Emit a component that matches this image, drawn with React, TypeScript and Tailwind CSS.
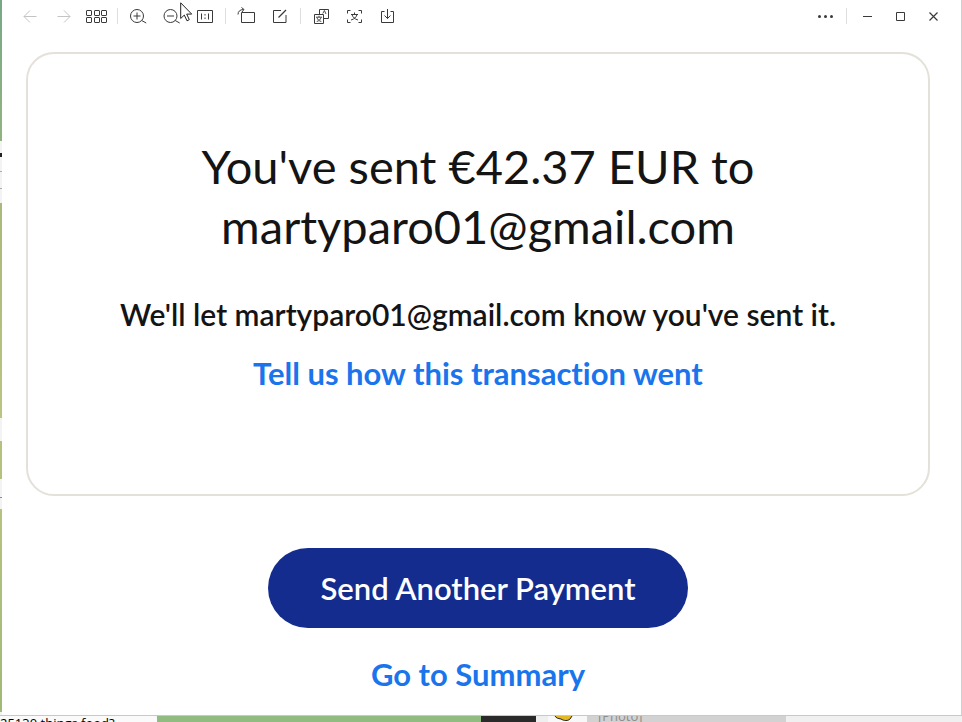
import type { ReactNode } from "react";

export default function App() {
  return (
    <div className="flex min-h-screen flex-col bg-[#f3f3f3] font-['Lato',sans-serif] [font-variant-ligatures:none]">
      <div className="flex flex-1">
        <DesktopEdge />
        <div className="relative flex min-w-0 flex-1 flex-col border-r border-[#cfcfcf] bg-white">
          <Toolbar />
          <main className="flex flex-col items-center pt-5 pr-[31px] pb-2 pl-6">
            <section className="flex w-full flex-col items-center rounded-[28px] border-2 border-[#e4e0da] px-20 pt-[82px] pb-[92px] text-center text-[#141414]">
              <h1 className="max-w-[600px] text-[47px] leading-[60px]">
                You've sent €42.37 EUR to martyparo01@gmail.com
              </h1>
              <p className="mt-7 text-[30px] leading-[60px] font-semibold">
                We'll let martyparo01@gmail.com know you've sent it.
              </p>
              <a href="#feedback" className="text-[31px] leading-[58px] font-bold text-[#1a74ec]">
                Tell us how this transaction went
              </a>
            </section>
            <button
              type="button"
              className="mt-[52px] h-20 rounded-full bg-[#142c8e] px-[52px] text-[31px] font-semibold text-white"
            >
              Send Another Payment
            </button>
            <a href="#summary" className="mt-4 text-[31px] leading-[60px] font-bold text-[#1a74ec]">
              Go to Summary
            </a>
          </main>
          <Cursor />
        </div>
      </div>
      <ChatStrip />
    </div>
  );
}

function Toolbar() {
  return (
    <header className="flex h-8 items-center justify-between pr-[11px] pl-3 text-[#3a3a3a]">
      <div className="flex items-center">
        <ToolButton label="Previous" muted>
          <path d="M16.5 10.5H4M10 4.5l-6 6 6 6" />
        </ToolButton>
        <ToolButton label="Next" muted>
          <path d="M4.5 10.5H17M11 4.5l6 6-6 6" />
        </ToolButton>
        <ToolButton label="Thumbnails">
          {[4.5, 11.5].map((y) =>
            [0.5, 8.5, 15.5].map((x) => <rect key={`${x}-${y}`} x={x} y={y} width="5" height="5" rx="0.5" />)
          )}
        </ToolButton>
        <Separator />
        <ToolButton label="Zoom in">
          <circle cx="9" cy="10" r="6.5" />
          <path d="M5.5 10h7M9 6.5v7M13.7 14.5l4.5 2.5" />
        </ToolButton>
        <ToolButton label="Zoom out">
          <circle cx="9.5" cy="10" r="6.5" />
          <path d="M6 10h7M14.2 14.5l4.5 2.5" />
        </ToolButton>
        <ToolButton label="Actual size">
          <path d="M3.5 4.5h15v12h-15zM7.5 7.5v6M14.5 7.5v6M11 8v1.5M11 11.5V13" />
        </ToolButton>
        <Separator />
        <ToolButton label="Rotate">
          <path d="M5.5 6.5h13v10h-13zM2 8.5C2 5.5 4 3.5 7.5 3.5M5.5 1.5l2.5 2-2 2.5" />
        </ToolButton>
        <ToolButton label="Edit">
          <path d="M12 4.5H4.5v12h12.5v-7.5" />
          <path strokeWidth="1.3" d="M9.5 11.5l7.5-7.5" />
        </ToolButton>
        <Separator />
        <ToolButton label="Translate">
          <path d="M8.5 8.5v-5h9v9h-5M3.5 8.5h9v9h-9z" />
          <path
            strokeWidth="0.9"
            d="M5 11.2h6M8 9.8v1.4M6 11.5c.5 2 2 3.5 4.3 4M10 11.5c-.5 2-2 3.5-4.3 4M11.8 7.500l1.600-3 1.600 3.500"
          />
        </ToolButton>
        <ToolButton label="Extract text">
          <path d="M3.5 7.5v-3h3M14.5 4.5h3v3M17.5 13.5v3h-3M6.5 16.5h-3v-3" />
          <path d="M7 8.5h7M10.5 6.5v2M8 8.5c.6 2.6 2.5 4.5 6 5.5M13 8.5c-.6 2.6-2.5 4.5-6 5.5" />
        </ToolButton>
        <ToolButton label="Save">
          <path d="M7.5 5.5h-3v11h12v-11h-3M10.5 3v9.5M7.5 9.5l3 3 3-3" />
        </ToolButton>
      </div>
      <div className="flex items-center">
        <ToolButton label="More">
          <g fill="currentColor" stroke="none">
            <circle cx="4.5" cy="10.5" r="1.5" />
            <circle cx="10.5" cy="10.5" r="1.5" />
            <circle cx="16.5" cy="10.5" r="1.5" />
          </g>
        </ToolButton>
        <Separator />
        <ToolButton label="Minimize">
          <path d="M6 10.5h9" />
        </ToolButton>
        <ToolButton label="Maximize">
          <path d="M6.5 6.5h8v8h-8z" />
        </ToolButton>
        <ToolButton label="Close">
          <path strokeWidth="1.2" d="M6.5 6.5l8 8M14.5 6.5l-8 8" />
        </ToolButton>
      </div>
    </header>
  );
}

function ToolButton({ label, muted, children }: { label: string; muted?: boolean; children: ReactNode }) {
  return (
    <button
      type="button"
      aria-label={label}
      className={`flex h-8 w-[33px] items-center justify-center ${muted ? "text-[#c4c4c4]" : ""}`}
    >
      <svg width="21" height="20" viewBox="0 0 21 20" fill="none" stroke="currentColor" strokeWidth="1">
        {children}
      </svg>
    </button>
  );
}

function Separator() {
  return <span className="mx-1 h-4 w-px bg-[#dedede]" />;
}

function Cursor() {
  return (
    <svg
      className="pointer-events-none absolute top-[2px] left-[178px]"
      width="14"
      height="21"
      viewBox="0 0 14 21"
      fill="#fff"
      stroke="#222"
      strokeWidth="1"
    >
      <path d="M.7.8v15.7l3.6-3.4 2.7 5.7 2.3-1.1-2.6-5.6h5z" />
    </svg>
  );
}

// sliver of the chat wallpaper left of the viewer
function DesktopEdge() {
  return (
    <div className="flex w-[2px] flex-col overflow-hidden">
      <div className="h-[141px] bg-linear-to-b from-[#76a886] to-[#92b380]" />
      <div className="flex h-[62px] flex-col bg-[#f3f3f3]">
        <div className="mt-3 h-1 bg-[#222]" />
        <div className="mt-[14px] h-px bg-[#aaa]" />
        <div className="mt-4 h-px bg-[#aaa]" />
      </div>
      <div className="h-[215px] bg-linear-to-b from-[#a8b97b] to-[#bac580]" />
      <div className="h-[23px] bg-[#f3f3f3]" />
      <div className="h-[38px] bg-[#b3c37d]" />
      <div className="h-[30px] bg-[#f3f3f3] pt-[18px]">
        <div className="h-px bg-[#8888b8]" />
      </div>
      <div className="h-[203px] bg-linear-to-b from-[#b5c37f] to-[#9fb977]" />
    </div>
  );
}

function ChatStrip() {
  return (
    <div className="flex h-[7px] shrink-0 overflow-hidden border-t border-[#c8c8c8] font-['Open_Sans',sans-serif] text-[13px] leading-[14px]">
      <div className="w-[157px] shrink-0 rounded-tr-sm bg-[#fafafa] whitespace-nowrap text-black">25130 things food?</div>
      <div className="w-[324px] shrink-0 bg-[#90bb81]" />
      <div className="w-[55px] shrink-0 bg-[#2a2a2a]" />
      <div className="w-3 shrink-0 bg-[#efefef]" />
      <div className="w-[39px] shrink-0 bg-[#f8f8f8]">
        <svg width="39" height="6" viewBox="0 0 39 6" fill="#e3b823" stroke="#222">
          <path d="M7 0c1 2 3 2.5 6 3 3 2 7 2 9 0l2-3" />
        </svg>
      </div>
      <div className="w-[199px] shrink-0 bg-[#d2d2d2] pl-[11px] leading-[0] text-[#8c8c8c]">[Photo]</div>
      <div className="flex-1 bg-[#f0f0f0]" />
    </div>
  );
}
